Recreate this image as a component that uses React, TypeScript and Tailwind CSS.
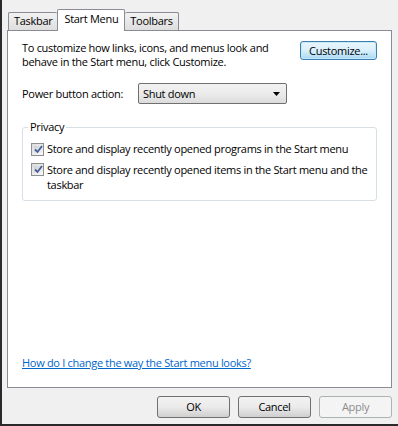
import React from "react";

const font = "font-['Open_Sans','Noto_Sans',sans-serif] tracking-[-0.3px]";

const Checkbox = () => (
  <span className="w-[13px] h-[13px] shrink-0 border border-[#8e8f8f] bg-gradient-to-br from-[#dcdcdc] to-[#f8f8f8] p-[2px] flex">
    <span className="flex-1 bg-gradient-to-br from-[#cbcfd5] to-[#f6f6f6] flex items-center justify-center">
      <svg width="9" height="9" viewBox="0 0 9 9">
        <path d="M1 4.5 L3.5 7 L8 1" fill="none" stroke="#4a5f97" strokeWidth="1.8" />
      </svg>
    </span>
  </span>
);

const Tab = ({ label, active }: { label: string; active?: boolean }) =>
  active ? (
    <div className="relative z-10 -mb-px h-[22px] px-[6px] pt-[2px] bg-white border border-b-0 border-[#898c95] rounded-t-[2px] text-[11px] text-black whitespace-nowrap">
      {label}
    </div>
  ) : (
    <div className="h-[18px] px-[5px] pt-[1px] bg-gradient-to-b from-[#f2f2f2] to-[#dedede] border border-b-0 border-[#898c95] rounded-t-[2px] text-[11px] text-black whitespace-nowrap first:border-r-0 last:border-l-0">
      {label}
    </div>
  );

const DialogButton = ({
  label,
  disabled,
}: {
  label: string;
  disabled?: boolean;
}) => (
  <button
    className={`w-[73px] h-[22px] rounded-[3px] border text-[11px] ${
      disabled
        ? "border-[#adb2b5] bg-[#f4f4f4] text-[#8d8d8d]"
        : "border-[#707070] bg-gradient-to-b from-[#f2f2f2] via-[#ebebeb] to-[#cfcfcf] text-black"
    }`}
  >
    {label}
  </button>
);

export default function App() {
  return (
    <div
      className={`${font} w-[398px] h-[426px] bg-[#f0f0f0] border-l-2 border-b-2 border-[#2a2a2a] flex flex-col leading-[14px]`}
    >
      {/* Tabs */}
      <div className="flex items-end pl-[6px] pt-[9px]">
        <Tab label="Taskbar" />
        <Tab label="Start Menu" active />
        <Tab label="Toolbars" />
      </div>

      {/* Panel */}
      <div className="mx-[5px] mr-[6px] h-[358px] bg-white border border-[#898c95] flex flex-col px-[14px]">
        <div className="flex items-start justify-between pt-[10px]">
          <p className="text-[11px] text-black whitespace-nowrap">
            To customize how links, icons, and menus look and
            <br />
            behave in the Start menu, click Customize.
          </p>
          <button className="w-[77px] h-[19px] rounded-[3px] border border-[#3c7fb1] bg-gradient-to-b from-[#eaf6fd] via-[#d9f0fc] to-[#a7d9f5] text-[11px] text-black shadow-[inset_0_0_0_1px_#c8e8f8]">
            Customize...
          </button>
        </div>

        <div className="flex items-center mt-[14px]">
          <span className="text-[11px] text-black w-[116px] whitespace-nowrap">
            Power button action:
          </span>
          <div className="w-[149px] h-[21px] rounded-[2px] border border-[#707070] bg-gradient-to-b from-[#f2f2f2] via-[#ebebeb] to-[#dcdcdc] flex items-center justify-between pl-[4px] pr-[6px]">
            <span className="text-[11px] text-black">Shut down</span>
            <svg width="7" height="4" viewBox="0 0 7 4">
              <path d="M0 0 H7 L3.5 4 Z" fill="#000" />
            </svg>
          </div>
        </div>

        {/* Privacy group */}
        <div className="relative mt-[23px] border border-[#d5dfe5] rounded-[3px] pl-[8px] pr-[6px] pt-[14px] pb-[8px]">
          <span className="absolute -top-[8px] left-[5px] bg-white px-[2px] text-[11px] text-black">
            Privacy
          </span>
          <div className="flex items-start gap-[3px]">
            <span className="mt-[1px]">
              <Checkbox />
            </span>
            <span className="text-[11px] text-black whitespace-nowrap">
              Store and display recently opened programs in the Start menu
            </span>
          </div>
          <div className="flex items-start gap-[3px] mt-[6px]">
            <span className="mt-[1px]">
              <Checkbox />
            </span>
            <span className="text-[11px] text-black leading-[15px] whitespace-nowrap">
              Store and display recently opened items in the Start menu and the
              <br />
              taskbar
            </span>
          </div>
        </div>

        <div className="flex-1" />
        <a className="text-[11px] text-[#0066cc] underline mb-[17px] cursor-pointer whitespace-nowrap">
          How do I change the way the Start menu looks?
        </a>
      </div>

      {/* Footer */}
      <div className="flex justify-end gap-[8px] pr-[6px] pt-[8px]">
        <DialogButton label="OK" />
        <DialogButton label="Cancel" />
        <DialogButton label="Apply" disabled />
      </div>
    </div>
  );
}
